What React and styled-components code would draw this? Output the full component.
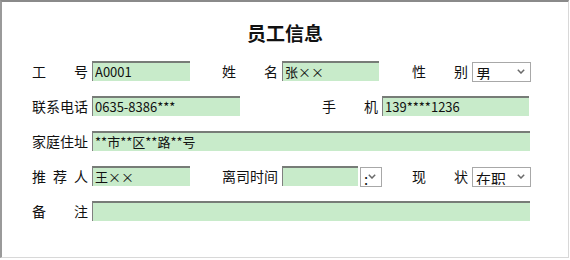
import React from "react";
import styled, { createGlobalStyle } from "styled-components";

const GlobalStyle = createGlobalStyle`
  body {
    margin: 0;
    background: #ffffff;
    font-family: "Noto Sans CJK SC", "Liberation Sans", sans-serif;
  }
`;

const Frame = styled.div`
  box-sizing: border-box;
  width: 569px;
  height: 258px;
  border-top: 2px solid #8a8a8a;
  border-left: 2px solid #9a9a9a;
  border-right: 1px solid #d8d8d8;
  border-bottom: 1px solid #d8d8d8;
  padding: 17px 0 0 30px;
`;

const Title = styled.h1`
  margin: 0 0 14px -30px;
  text-align: center;
  font-size: 19px;
  line-height: 28px;
  font-weight: bold;
  color: #111;
`;

const Rows = styled.div`
  display: flex;
  flex-direction: column;
  gap: 15px;
`;

const Row = styled.div`
  display: flex;
  align-items: center;
  height: 20px;
`;

const Field = styled.div`
  display: flex;
  align-items: center;
  gap: 4px;
  width: ${(p) => (p.$w ? `${p.$w}px` : "auto")};
  flex: none;
`;

const Label = styled.label`
  width: 56px;
  font-size: 14px;
  line-height: 20px;
  color: #111;
  text-align: justify;
  text-align-last: justify;
  white-space: nowrap;
`;

const TextBox = styled.input`
  box-sizing: border-box;
  width: ${(p) => p.$w}px;
  height: 20px;
  margin: 0;
  padding: 0 0 1px 2px;
  background: #c8ebca;
  border: none;
  border-top: 2px solid #777c77;
  border-left: 1px solid #808080;
  font-family: "Noto Sans CJK SC", "Liberation Sans", sans-serif;
  font-size: 13px;
  line-height: 17px;
  color: #111;
  outline: none;
`;

const SelectWrap = styled.div`
  position: relative;
  width: ${(p) => p.$w}px;
  height: 20px;
`;

const Select = styled.select`
  box-sizing: border-box;
  appearance: none;
  width: 100%;
  height: 100%;
  margin: 0;
  padding: 0 0 1px 3px;
  border: 1px solid #a8a8a8;
  border-radius: 0;
  background: #fff;
  font-family: "Noto Sans CJK SC", "Liberation Sans", sans-serif;
  font-size: 15px;
  color: #111;
  outline: none;
`;

const Chevron = styled.svg`
  position: absolute;
  right: 6px;
  top: 8px;
  pointer-events: none;
`;

const Pair = styled.div`
  display: flex;
  align-items: center;
  gap: 2px;
`;

function Dropdown({ w, value, options }) {
  return (
    <SelectWrap $w={w}>
      <Select defaultValue={value}>
        {options.map((o) => (
          <option key={o}>{o}</option>
        ))}
      </Select>
      <Chevron width="8" height="5" viewBox="0 0 8 5">
        <path d="M0.8 0.8 L4 4 L7.2 0.8" fill="none" stroke="#6a6a6a" strokeWidth="1.5" />
      </Chevron>
    </SelectWrap>
  );
}

export default function App() {
  return (
    <>
      <GlobalStyle />
      <Frame>
        <Title>员工信息</Title>
        <Rows>
          <Row>
            <Field $w={190}>
              <Label>工 号</Label>
              <TextBox $w={98} defaultValue="A0001" />
            </Field>
            <Field $w={190}>
              <Label>姓 名</Label>
              <TextBox $w={97} defaultValue="张××" />
            </Field>
            <Field>
              <Label>性 别</Label>
              <Dropdown w={59} value="男" options={["男", "女"]} />
            </Field>
          </Row>
          <Row>
            <Field $w={290}>
              <Label>联系电话</Label>
              <TextBox $w={148} defaultValue="0635-8386***" />
            </Field>
            <Field>
              <Label>手 机</Label>
              <TextBox $w={147} defaultValue="139****1236" />
            </Field>
          </Row>
          <Row>
            <Field>
              <Label>家庭住址</Label>
              <TextBox $w={438} defaultValue="**市**区**路**号" />
            </Field>
          </Row>
          <Row>
            <Field $w={190}>
              <Label>推 荐 人</Label>
              <TextBox $w={98} defaultValue="王××" />
            </Field>
            <Field $w={190}>
              <Label>离司时间</Label>
              <Pair>
                <TextBox $w={76} defaultValue="" />
                <Dropdown w={22} value=":" options={[":"]} />
              </Pair>
            </Field>
            <Field>
              <Label>现 状</Label>
              <Dropdown w={59} value="在职" options={["在职", "离职"]} />
            </Field>
          </Row>
          <Row>
            <Field>
              <Label>备 注</Label>
              <TextBox $w={438} defaultValue="" />
            </Field>
          </Row>
        </Rows>
      </Frame>
    </>
  );
}
